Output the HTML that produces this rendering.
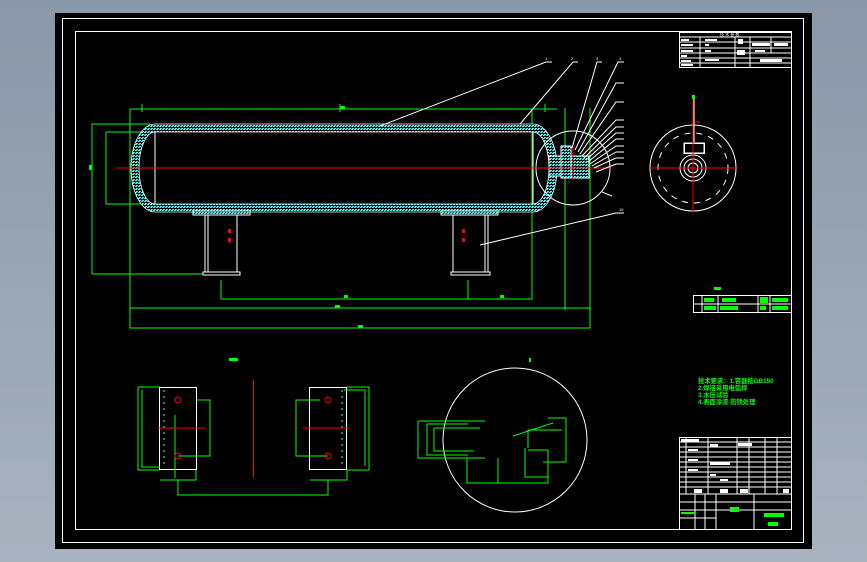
<!DOCTYPE html>
<html><head><meta charset="utf-8"><style>
html,body{margin:0;padding:0;width:867px;height:562px;overflow:hidden;background:linear-gradient(#8a97a8,#a9b3c0);}
svg{position:absolute;left:0;top:0}
text{font-family:"Liberation Sans","Noto Sans CJK SC",sans-serif;}
</style></head><body>
<svg width="867" height="562" viewBox="0 0 867 562" shape-rendering="crispEdges">
<defs>
<pattern id="h" width="3" height="3" patternUnits="userSpaceOnUse"><rect width="3" height="3" fill="#000"/><rect width="2" height="1" fill="#3ff"/><rect x="1" y="2" width="2" height="1" fill="#3ff"/></pattern>
</defs>
<rect x="55" y="13" width="757" height="536" fill="#000"/>
<rect x="62.5" y="18.5" width="741" height="524" fill="none" stroke="#fff"/>
<rect x="75.5" y="31.5" width="716" height="498" fill="none" stroke="#fff"/>

<g stroke="#0f0" fill="none">
<path d="M130 109H557M130 109V328H590V108M130 308H590M565 108V310M532 109V299H221V280M468 280V299M92 124V274H203M106 132V204H150M92 124H150M106 132H150M142 104V112M340 104V112M545 104V112"/>
</g>
<g fill="#0f0"><rect x="340" y="106" width="5" height="3"/><rect x="344" y="295" width="4" height="3"/><rect x="335" y="305" width="5" height="3"/><rect x="358" y="325" width="5" height="3"/><rect x="89" y="165" width="3" height="5"/><rect x="500" y="295" width="4" height="3"/></g>

<path d="M155 124H533A24 44 0 0 1 533 212H155A24 44 0 0 1 155 124Z M155 132H533A16 36 0 0 1 533 204H155A16 36 0 0 1 155 132Z" fill="url(#h)" fill-rule="evenodd" stroke="#fff" stroke-width="0.8" shape-rendering="auto"/>
<path d="M155 132V204M533 132V204" stroke="#fff"/>
<rect x="193" y="211" width="57" height="4" fill="url(#h)" stroke="#fff" stroke-width="0.7"/>
<rect x="441" y="211" width="57" height="4" fill="url(#h)" stroke="#fff" stroke-width="0.7"/>
<g stroke="#fff" fill="none">
<path d="M205 215V272M208 215V272M237 215V272M453 215V272M485 215V272M488 215V272"/>
<rect x="203" y="272" width="37" height="3"/><rect x="451" y="272" width="39" height="3"/>
</g>
<g fill="#f00"><rect x="228" y="229" width="3" height="4"/><rect x="228" y="238" width="3" height="4"/><rect x="462" y="229" width="3" height="4"/><rect x="462" y="238" width="3" height="4"/></g>
<rect x="549" y="156" width="12" height="20" fill="url(#h)" stroke="#fff" stroke-width="0.6"/>
<rect x="561" y="146" width="10" height="32" fill="url(#h)" stroke="#fff" stroke-width="0.6"/>
<rect x="571" y="156" width="18" height="22" fill="url(#h)" stroke="#fff" stroke-width="0.6"/>
<circle cx="573" cy="168" r="37" fill="none" stroke="#fff" shape-rendering="auto"/>
<path d="M116 168H610" stroke="#f00"/>
<path d="M573 146V180" stroke="#f00"/>
<g stroke="#fff" fill="none" shape-rendering="auto">
<path d="M380 126L546 62H552M520 124L573 62H578M572 148L597 62H602M575 150L618 62H624M578 152L616 83H624M580 154L616 102H624M582 156L616 120H624M584 158L616 127H624M586 160L616 133H624M588 162L616 139H624M590 164L616 146H624M592 166L616 152H624M594 168L616 158H624M596 172L616 164H624M480 245L616 213H624M602 192L612 196"/>
</g>
<g fill="#fff" font-size="4"><text x="545" y="60">1</text><text x="571" y="60">2</text><text x="596" y="60">3</text><text x="619" y="60">4</text><text x="619" y="211">15</text></g>
<g shape-rendering="auto">
<circle cx="693" cy="168" r="43" fill="none" stroke="#fff"/>
<circle cx="693" cy="168" r="35" fill="none" stroke="#fff" stroke-dasharray="6 6"/>
<circle cx="693" cy="168" r="13" fill="none" stroke="#fff"/>
<circle cx="693" cy="168" r="9" fill="none" stroke="#fff"/>
<circle cx="693" cy="168" r="5" fill="none" stroke="#fff"/>
</g>
<rect x="684" y="143" width="20" height="10" fill="none" stroke="#fff" stroke-width="1.5"/>
<path d="M693 96V140M693 122H700M650 168H738M693 128V212" stroke="#f00"/>
<path d="M694 96V142" stroke="#fff"/>
<rect x="692" y="95" width="3" height="4" fill="#0f0"/>

<g stroke="#fff" fill="none">
<rect x="679.5" y="32.5" width="112" height="35"/>
<path d="M679 37H792M679 42H792M679 48H792M679 53H792M679 58H792M679 63H792M700 37V67M735 37V67M750 37V67M771 37V53"/>
</g>
<text x="720" y="36" fill="#fff" font-size="4">技 术 参 数</text>
<g fill="#fff"><rect x="681" y="39" width="8" height="2"/><rect x="681" y="44" width="12" height="2"/><rect x="681" y="50" width="12" height="2"/><rect x="681" y="55" width="6" height="2"/><rect x="681" y="60" width="10" height="2"/><rect x="681" y="64" width="12" height="2"/><rect x="752" y="43" width="18" height="3"/><rect x="774" y="43" width="14" height="3"/><rect x="738" y="39" width="5" height="5"/><rect x="760" y="59" width="22" height="3"/><rect x="705" y="59" width="14" height="2"/><rect x="705" y="39" width="12" height="2"/><rect x="705" y="44" width="4" height="2"/><rect x="705" y="50" width="6" height="2"/><rect x="737" y="50" width="8" height="5"/><rect x="755" y="50" width="10" height="2"/></g>

<rect x="714" y="287" width="7" height="3" fill="#0f0"/>
<g stroke="#fff" fill="none"><rect x="693.5" y="295.5" width="98" height="17"/><path d="M693 304H792M702 296V312M718 296V312M758 296V312M770 296V312"/></g>
<g fill="#0f0"><rect x="704" y="298" width="10" height="4"/><rect x="722" y="298" width="14" height="4"/><rect x="772" y="298" width="16" height="4"/><rect x="760" y="297" width="8" height="6"/><rect x="704" y="306" width="12" height="4"/><rect x="720" y="306" width="18" height="4"/><rect x="772" y="306" width="16" height="4"/><rect x="760" y="306" width="6" height="4"/></g>
<g fill="#0f0" font-size="6.3" font-weight="bold">
<text x="698" y="383">技术要求：1.容器按GB150</text>
<text x="698" y="390">2.焊接采用电弧焊</text>
<text x="698" y="397">3.水压试验</text>
<text x="698" y="404">4.表面涂漆 防锈处理</text>
</g>

<g stroke="#fff" fill="none">
<rect x="679.5" y="437.5" width="112" height="92"/>
<path d="M679 442H792M679 447H792M679 452H792M679 457H792M679 462H792M679 467H792M679 472H792M679 477H792M679 482H792M679 487H792M679 494H792M716 502H792M716 510H792M686 437V494M708 437V494M737 437V494M749 437V494M765 437V494M777 437V494M716 494V530M754 494V530M679 502H716M679 510H716M679 518H716M695 494V530M705 494V530"/>
</g>
<g fill="#0f0"><rect x="730" y="507" width="9" height="5"/><rect x="764" y="513" width="20" height="4"/><rect x="768" y="522" width="10" height="4"/><rect x="681" y="512" width="14" height="2"/></g>
<g fill="#fff"><rect x="681" y="439" width="18" height="3"/><rect x="710" y="444" width="8" height="3"/><rect x="738" y="443" width="14" height="3"/><rect x="710" y="462" width="20" height="3"/><rect x="694" y="489" width="8" height="4"/><rect x="720" y="489" width="8" height="4"/><rect x="740" y="489" width="8" height="4"/><rect x="783" y="489" width="6" height="4"/><rect x="688" y="449" width="10" height="2"/><rect x="688" y="459" width="10" height="2"/><rect x="688" y="469" width="10" height="2"/><rect x="710" y="474" width="6" height="2"/><rect x="720" y="479" width="8" height="2"/></g>

<rect x="229" y="358" width="9" height="3" fill="#0f0"/>
<path d="M253.5 380V477" stroke="#f00"/>
<g stroke="#fff" fill="none">
<rect x="159.5" y="387.5" width="37" height="82"/>
<rect x="309.5" y="387.5" width="37" height="82"/>
</g>
<path d="M164 390V467M342 390V467" stroke="#3ff" stroke-dasharray="2 4"/>
<g stroke="#0f0" fill="none">
<path d="M138 387H160M138 387V470H160M142 390V467H160M160 480H196V470M178 480V495H328V480M310 480H347V470M347 387H369V470H347M344 390H365V466M196 400H210V456H178M175 478V415M320 400H296V456H328"/>
</g>
<path d="M158 428H205M303 428H349" stroke="#f00"/>
<g fill="none" stroke="#f00" shape-rendering="auto"><circle cx="178" cy="400" r="3"/><circle cx="178" cy="456" r="3"/><circle cx="328" cy="400" r="3"/><circle cx="328" cy="456" r="3"/></g>

<circle cx="515" cy="440" r="72" fill="none" stroke="#fff" shape-rendering="auto"/>
<g stroke="#0f0" fill="none">
<path d="M418 421H485M418 421V458H485M427 424H468M427 424V455H468M434 428H480M434 428V451H474M467 458V483H548V450H528M498 458V483M525 448V477H548M528 448V430H562M566 418V462H543M548 418H566M513 436L553 423"/>
</g>
<rect x="529" y="358" width="2" height="4" fill="#0f0"/>
</svg>
</body></html>
